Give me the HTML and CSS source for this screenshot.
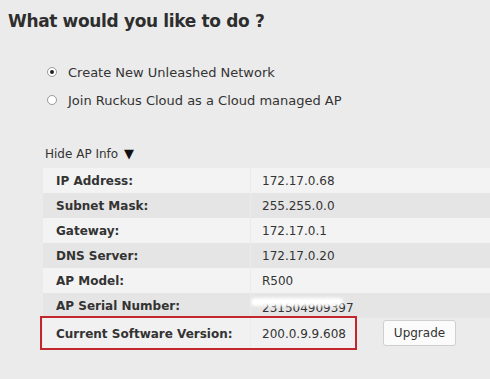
FILE: index.html
```html
<!DOCTYPE html>
<html lang="en">
<head>
    <meta charset="UTF-8">
    <title>Unleashed Setup</title>
    <link rel="stylesheet" href="styles.css">
</head>
<body>
    <div class="page">
        <h1 class="title">What would you like to do ?</h1>

        <ul class="choices">
            <li><span class="radio checked"></span>Create New Unleashed Network</li>
            <li><span class="radio"></span>Join Ruckus Cloud as a Cloud managed AP</li>
        </ul>

        <div class="ap-info">
            <div class="toggle">Hide AP Info <span class="arrow">&#9660;</span></div>

            <div class="info-table">
                <div class="row light"><div class="label">IP Address:</div><div class="value">172.17.0.68</div></div>
                <div class="row dark"><div class="label">Subnet Mask:</div><div class="value">255.255.0.0</div></div>
                <div class="row light"><div class="label">Gateway:</div><div class="value">172.17.0.1</div></div>
                <div class="row dark"><div class="label">DNS Server:</div><div class="value">172.17.0.20</div></div>
                <div class="row light"><div class="label">AP Model:</div><div class="value">R500</div></div>
                <div class="row dark"><div class="label">AP Serial Number:</div><div class="value serial"><span class="serial-text">231504909397</span><span class="smudge"></span></div></div>
                <div class="row version">
                    <div class="label">Current Software Version:</div>
                    <div class="value">200.0.9.9.608</div>
                    <span class="mark"></span>
                    <button class="upgrade">Upgrade</button>
                </div>
            </div>
        </div>
    </div>
</body>
</html>
```

FILE: styles.css
```css
html, body {
    margin: 0;
    overflow: hidden;
}
body {
    font-family: "DejaVu Sans", Verdana, sans-serif;
    background-color: #ebebeb;
    color: #333;
    width: 490px;
    height: 379px;
}
.page {
    padding: 0 0 0 8px;
}
.title {
    margin: 0;
    padding-top: 10px;
    font-size: 17px;
    line-height: 22px;
    font-weight: bold;
    letter-spacing: -0.35px;
    color: #2e2e2e;
}
.choices {
    list-style: none;
    margin: 26px 0 0 39px;
    padding: 0;
    font-size: 13px;
}
.choices li {
    display: flex;
    align-items: center;
    height: 28px;
}
.radio {
    width: 8px;
    height: 8px;
    border: 1px solid #9a9a9a;
    border-radius: 50%;
    background: #fff;
    margin-right: 11px;
    position: relative;
}
.radio.checked::after {
    content: "";
    position: absolute;
    left: 2px;
    top: 2px;
    width: 4px;
    height: 4px;
    border-radius: 50%;
    background: #222;
}
.ap-info {
    margin: 32px 0 0 35px;
}
.toggle {
    font-size: 12px;
    line-height: 16px;
    margin-left: 2px;
    color: #333;
}
.arrow {
    font-size: 13px;
    margin-left: 2px;
    color: #111;
}
.info-table {
    margin-top: 6px;
    width: 460px;
}
.row {
    display: flex;
    height: 25px;
    align-items: stretch;
    font-size: 12px;
}
.row .label {
    width: 194px;
    padding-left: 13px;
    font-weight: bold;
    display: flex;
    align-items: center;
}
.row .value {
    flex: 1;
    padding-left: 11px;
    margin-left: 1px;
    display: flex;
    align-items: center;
}
.row.light .label, .row.light .value {
    background-color: #f3f3f3;
}
.row.dark .label, .row.dark .value {
    background-color: #e5e5e5;
}
.serial {
    position: relative;
    overflow: hidden;
}
.serial-text {
    position: relative;
    top: 2px;
}
.smudge {
    position: absolute;
    left: 0;
    top: 5px;
    width: 92px;
    height: 8px;
    background: #fff;
    border-radius: 4px;
    filter: blur(1.5px);
}
.row.version {
    position: relative;
    height: 32px;
}
.row.version .label {
    background-color: #f1f1f1;
}
.row.version .value {
    flex: none;
    width: 94px;
    background-color: #f1f1f1;
}
.mark {
    position: absolute;
    left: -3px;
    top: -2px;
    width: 313px;
    height: 30px;
    border: 2px solid #c1272d;
}
.upgrade {
    margin: 2px 0 0 27px;
    width: 73px;
    height: 26px;
    background: #fbfbfb;
    border: 1px solid #cfcfcf;
    border-radius: 3px;
    font-family: "DejaVu Sans", Verdana, sans-serif;
    font-size: 12px;
    color: #333;
    padding: 0;
}
```
